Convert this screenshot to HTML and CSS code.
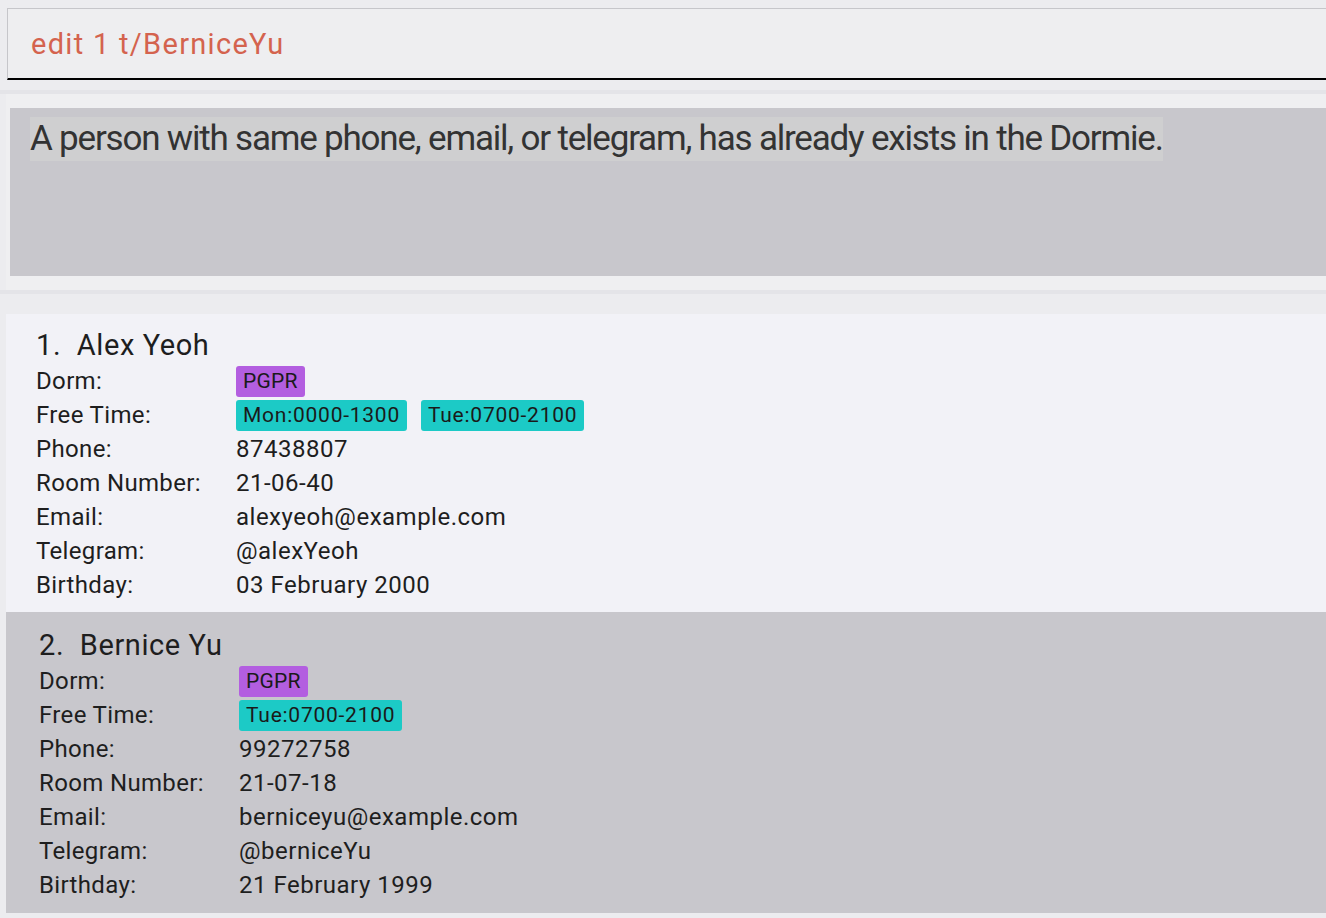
FILE: index.html
```html
<!DOCTYPE html>
<html>
<head>
<meta charset="utf-8">
<link rel="stylesheet" href="styles.css">
</head>
<body>
<div class="app">
  <div class="command-area">
    <div class="command-box">edit 1 t/BerniceYu</div>
  </div>
  <div class="separator"></div>
  <div class="result-panel">
    <div class="result-box"><span class="result-text">A person with same phone, email, or telegram, has already exists in the Dormie.</span></div>
  </div>
  <div class="separator"></div>
  <div class="list">
    <div class="card card-light">
      <div class="name">1.&nbsp; Alex Yeoh</div>
      <div class="row"><span class="label">Dorm:</span><span class="value"><span class="tag tag-dorm">PGPR</span></span></div>
      <div class="row"><span class="label">Free Time:</span><span class="value"><span class="tag tag-time">Mon:0000-1300</span><span class="tag tag-time">Tue:0700-2100</span></span></div>
      <div class="row"><span class="label">Phone:</span><span class="value">87438807</span></div>
      <div class="row"><span class="label">Room Number:</span><span class="value">21-06-40</span></div>
      <div class="row"><span class="label">Email:</span><span class="value">alexyeoh@example.com</span></div>
      <div class="row"><span class="label">Telegram:</span><span class="value">@alexYeoh</span></div>
      <div class="row"><span class="label">Birthday:</span><span class="value">03 February 2000</span></div>
    </div>
    <div class="card card-dark">
      <div class="name">2.&nbsp; Bernice Yu</div>
      <div class="row"><span class="label">Dorm:</span><span class="value"><span class="tag tag-dorm">PGPR</span></span></div>
      <div class="row"><span class="label">Free Time:</span><span class="value"><span class="tag tag-time">Tue:0700-2100</span></span></div>
      <div class="row"><span class="label">Phone:</span><span class="value">99272758</span></div>
      <div class="row"><span class="label">Room Number:</span><span class="value">21-07-18</span></div>
      <div class="row"><span class="label">Email:</span><span class="value">berniceyu@example.com</span></div>
      <div class="row"><span class="label">Telegram:</span><span class="value">@berniceYu</span></div>
      <div class="row"><span class="label">Birthday:</span><span class="value">21 February 1999</span></div>
    </div>
  </div>
</div>
</body>
</html>
```
FILE: styles.css
```css
html, body {
  margin: 0;
  padding: 0;
  background: #ececef;
  overflow: hidden;
  font-family: Roboto, "Liberation Sans", sans-serif;
}

.app {
  width: 1326px;
  height: 918px;
  overflow: hidden;
}

.command-area {
  padding: 8px 0 0 7px;
}

.command-box {
  box-sizing: border-box;
  height: 72px;
  margin-right: -20px;
  background: #eeeef0;
  border-top: 1px solid #c6c6ca;
  border-left: 1px solid #c6c6ca;
  border-bottom: 2px solid #000;
  padding-left: 23px;
  color: #d4634e;
  font-size: 29px;
  letter-spacing: 1.3px;
  display: flex;
  align-items: center;
}

.separator {
  margin-top: 10px;
  height: 4px;
  background: #e4e4e8;
}

.result-panel + .separator {
  margin-top: 0;
}

.result-panel {
  margin-left: 6px;
  background: #efeff1;
  padding: 14px 0 14px 4px;
}

.result-box {
  height: 168px;
  box-sizing: border-box;
  background: #c8c7cc;
  padding: 9px 0 0 20px;
}

.result-text {
  display: inline-block;
  background: #cfcfd0;
  color: #333333;
  font-size: 35px;
  line-height: 44px;
  letter-spacing: -1.2px;
  white-space: nowrap;
}

.list {
  margin-top: 20px;
  margin-left: 6px;
  display: flex;
  flex-direction: column;
}

.card {
  padding: 13px 0 10px 30px;
  color: #1e1e1e;
}

.card-light {
  background: #f2f2f7;
}

.card-dark {
  background: #c8c7cc;
  padding: 15px 0 11px 33px;
}

.name {
  font-size: 29px;
  letter-spacing: 0.6px;
  line-height: 36px;
  height: 37px;
  white-space: pre;
}

.row {
  display: flex;
  align-items: center;
  height: 34px;
  font-size: 24px;
}

.label {
  width: 200px;
  flex: none;
  letter-spacing: 0.35px;
}

.value {
  display: flex;
  align-items: center;
  gap: 14px;
  letter-spacing: 0.5px;
}

.tag {
  display: inline-block;
  height: 31px;
  line-height: 31px;
  padding: 0 7px;
  border-radius: 3px;
  font-size: 21px;
  letter-spacing: 0.75px;
  color: #1a1a1a;
}

.tag-dorm {
  background: #b35ee0;
  letter-spacing: 0.2px;
}

.tag-time {
  background: #1ccac6;
}
```
